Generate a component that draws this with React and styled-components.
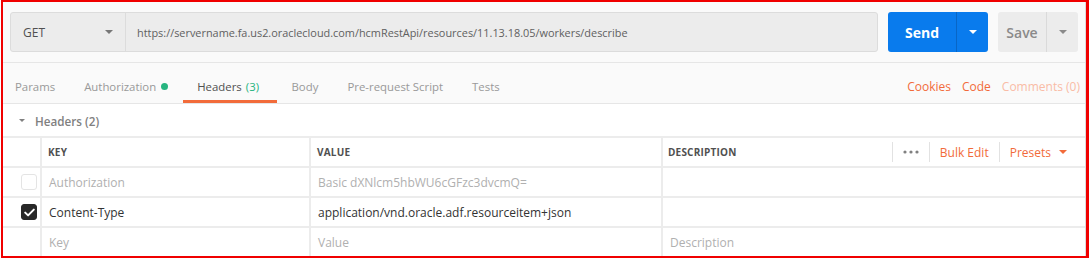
import React from 'react';
import styled, { createGlobalStyle } from 'styled-components';

const GlobalStyle = createGlobalStyle`
  html, body {
    margin: 0;
    padding: 0;
    background: #ffffff;
  }
  body {
    font-family: "Open Sans", "Noto Sans", sans-serif;
    -webkit-font-smoothing: antialiased;
  }
`;

const Frame = styled.div`
  margin-left: 1px;
  width: 1083px;
  border-style: solid;
  border-color: #f00000;
  border-width: 2px 3px 2px 2px;
  background: #ffffff;
  overflow: hidden;
`;

const Inner = styled.div`
  border-right: 1px solid #dcdcdc;
`;

const RequestBar = styled.div`
  display: flex;
  align-items: center;
  gap: 10px;
  padding: 10px 7px 10px 7px;
  background: #fafafa;
  border-bottom: 1px solid #e6e6e6;
`;

const UrlGroup = styled.div`
  display: flex;
  flex: 1;
  height: 40px;
  border: 1px solid #dcdcdc;
  border-radius: 3px;
  background: #ececec;
  box-sizing: border-box;
`;

const MethodSelect = styled.div`
  width: 115px;
  display: flex;
  align-items: center;
  justify-content: space-between;
  padding: 0 12px 0 12px;
  box-sizing: border-box;
  border-right: 1px solid #dcdcdc;
  font-size: 12px;
  color: #505050;
`;

const UrlText = styled.div`
  display: flex;
  align-items: center;
  padding-left: 11px;
  font-size: 10.9px;
  color: #606060;
  white-space: nowrap;
`;

const SplitButton = styled.div`
  display: flex;
  height: 40px;
  width: ${p => p.$width}px;
  border-radius: 3px;
  background: ${p => (p.$primary ? '#097bed' : '#ececec')};
  color: ${p => (p.$primary ? '#ffffff' : '#8a8a8a')};
  font-size: 14px;
  font-weight: ${p => (p.$primary ? 700 : 600)};
`;

const ButtonMain = styled.div`
  flex: 1;
  display: flex;
  align-items: center;
  justify-content: center;
`;

const ButtonArrow = styled.div`
  width: ${p => p.$width}px;
  display: flex;
  align-items: center;
  justify-content: center;
  border-left: 1px solid ${p => (p.$primary ? '#0866c6' : '#dadada')};
`;

const Caret = styled.span`
  display: inline-block;
  width: 0;
  height: 0;
  border-left: ${p => p.$size}px solid transparent;
  border-right: ${p => p.$size}px solid transparent;
  border-top: ${p => p.$size}px solid ${p => p.$color};
`;

const TabBar = styled.div`
  display: flex;
  align-items: stretch;
  justify-content: space-between;
  height: 40px;
  padding: 0 5px 0 0;
  background: #fafafa;
  border-bottom: 1px solid #e6e6e6;
`;

const Tabs = styled.div`
  display: flex;
  align-items: stretch;
`;

const Tab = styled.div`
  display: flex;
  align-items: center;
  padding: 10px ${p => p.$padRight ?? 14.5}px 0 14.5px;
  font-size: 11.4px;
  color: ${p => (p.$active ? '#505050' : '#999999')};
  border-bottom: 3px solid ${p => (p.$active ? '#f26b3a' : 'transparent')};
  box-sizing: border-box;
  white-space: nowrap;
  &:first-child {
    padding-left: 12px;
  }
`;

const Count = styled.span`
  color: #26b47f;
  margin-left: 4px;
`;

const Dot = styled.span`
  width: 7px;
  height: 7px;
  border-radius: 50%;
  background: #26b47f;
  margin-left: 5px;
`;

const Links = styled.div`
  display: flex;
  align-items: center;
  gap: 11px;
  padding-top: 7px;
`;

const Link = styled.span`
  font-size: 12px;
  color: ${p => (p.$faded ? '#f9bca6' : '#f26b3a')};
`;

const SectionHead = styled.div`
  display: flex;
  align-items: center;
  gap: 10px;
  height: 32px;
  padding-left: 16px;
  padding-top: 1px;
  box-sizing: border-box;
  font-size: 11.7px;
  font-weight: 600;
  color: #808080;
`;

const Table = styled.div`
  border-top: 2px solid #ececec;
`;

const Row = styled.div`
  display: grid;
  grid-template-columns: 39px 269px 352px 1fr;
  height: 30px;
  border-bottom: 2px solid #ececec;
  box-sizing: border-box;
  &:last-child {
    border-bottom: none;
    height: 28px;
  }
`;

const Cell = styled.div`
  display: flex;
  align-items: center;
  padding-left: ${p => (p.$center ? 0 : 7)}px;
  justify-content: ${p => (p.$center ? 'flex-end' : 'flex-start')};
  padding-right: ${p => (p.$center ? 3 : 0)}px;
  border-right: 2px solid #ececec;
  font-size: 12px;
  color: ${p => (p.$muted ? '#b0b0b0' : '#333333')};
  white-space: nowrap;
  overflow: hidden;
  &:last-child {
    border-right: none;
  }
`;

const HeadCell = styled(Cell)`
  padding-left: 6px;
  font-size: 10px;
  font-weight: 700;
  color: #505050;
  letter-spacing: 0.2px;
`;

const DescHead = styled(HeadCell)`
  justify-content: space-between;
  padding-left: 5px;
  padding-right: 18px;
`;

const Actions = styled.div`
  display: flex;
  align-items: center;
  height: 20px;
  font-size: 12px;
  font-weight: 400;
  letter-spacing: 0;
`;

const Action = styled.div`
  display: flex;
  align-items: center;
  gap: 8px;
  height: 20px;
  padding: 0 10px;
  border-left: 1px solid #e2e2e2;
  color: ${p => p.$color || '#f26b3a'};
  &:last-child {
    padding-right: 0;
  }
`;

const Check = styled.div`
  width: 16px;
  height: 16px;
  border-radius: 3px;
  box-sizing: border-box;
  border: 1px solid ${p => (p.$on ? '#282828' : '#e4e4e4')};
  background: ${p => (p.$on ? '#282828' : '#ffffff')};
  display: flex;
  align-items: center;
  justify-content: center;
`;

const CheckMark = () => (
  <svg width="11" height="9" viewBox="0 0 11 9">
    <path d="M1.2 4.6 L4.1 7.4 L9.8 1.6" fill="none" stroke="#fff" strokeWidth="2" strokeLinecap="round" strokeLinejoin="round" />
  </svg>
);

const DotsIcon = () => (
  <svg width="16" height="4" viewBox="0 0 16 4">
    <circle cx="2" cy="2" r="1.6" fill="#808080" />
    <circle cx="8" cy="2" r="1.6" fill="#808080" />
    <circle cx="14" cy="2" r="1.6" fill="#808080" />
  </svg>
);

const rows = [
  { on: false, key: 'Authorization', value: 'Basic dXNlcm5hbWU6cGFzc3dvcmQ=', muted: true },
  { on: true, key: 'Content-Type', value: 'application/vnd.oracle.adf.resourceitem+json', muted: false },
];

export default function App() {
  return (
    <>
      <GlobalStyle />
      <Frame>
        <Inner>
          <RequestBar>
            <UrlGroup>
              <MethodSelect>
                GET
                <Caret $size={4} $color="#777" />
              </MethodSelect>
              <UrlText>https://servername.fa.us2.oraclecloud.com/hcmRestApi/resources/11.13.18.05/workers/describe</UrlText>
            </UrlGroup>
            <SplitButton $primary $width={100}>
              <ButtonMain>Send</ButtonMain>
              <ButtonArrow $primary $width={31}>
                <Caret $size={4} $color="#fff" />
              </ButtonArrow>
            </SplitButton>
            <SplitButton $width={80}>
              <ButtonMain>Save</ButtonMain>
              <ButtonArrow $width={31}>
                <Caret $size={4} $color="#8a8a8a" />
              </ButtonArrow>
            </SplitButton>
          </RequestBar>

          <TabBar>
            <Tabs>
              <Tab>Params</Tab>
              <Tab>
                Authorization<Dot />
              </Tab>
              <Tab $active $padRight={18}>
                Headers<Count>(3)</Count>
              </Tab>
              <Tab>Body</Tab>
              <Tab>Pre-request Script</Tab>
              <Tab>Tests</Tab>
            </Tabs>
            <Links>
              <Link>Cookies</Link>
              <Link>Code</Link>
              <Link $faded>Comments (0)</Link>
            </Links>
          </TabBar>

          <SectionHead>
            <Caret $size={3.5} $color="#808080" />
            Headers (2)
          </SectionHead>

          <Table>
            <Row>
              <HeadCell />
              <HeadCell>KEY</HeadCell>
              <HeadCell>VALUE</HeadCell>
              <DescHead>
                DESCRIPTION
                <Actions>
                  <Action $color="#808080"><DotsIcon /></Action>
                  <Action>Bulk Edit</Action>
                  <Action>
                    Presets
                    <Caret $size={4} $color="#f26b3a" />
                  </Action>
                </Actions>
              </DescHead>
            </Row>
            {rows.map(r => (
              <Row key={r.key}>
                <Cell $center>
                  <Check $on={r.on}>{r.on && <CheckMark />}</Check>
                </Cell>
                <Cell $muted={r.muted}>{r.key}</Cell>
                <Cell $muted={r.muted}>{r.value}</Cell>
                <Cell />
              </Row>
            ))}
            <Row>
              <Cell />
              <Cell $muted>Key</Cell>
              <Cell $muted>Value</Cell>
              <Cell $muted>Description</Cell>
            </Row>
          </Table>
        </Inner>
      </Frame>
    </>
  );
}
